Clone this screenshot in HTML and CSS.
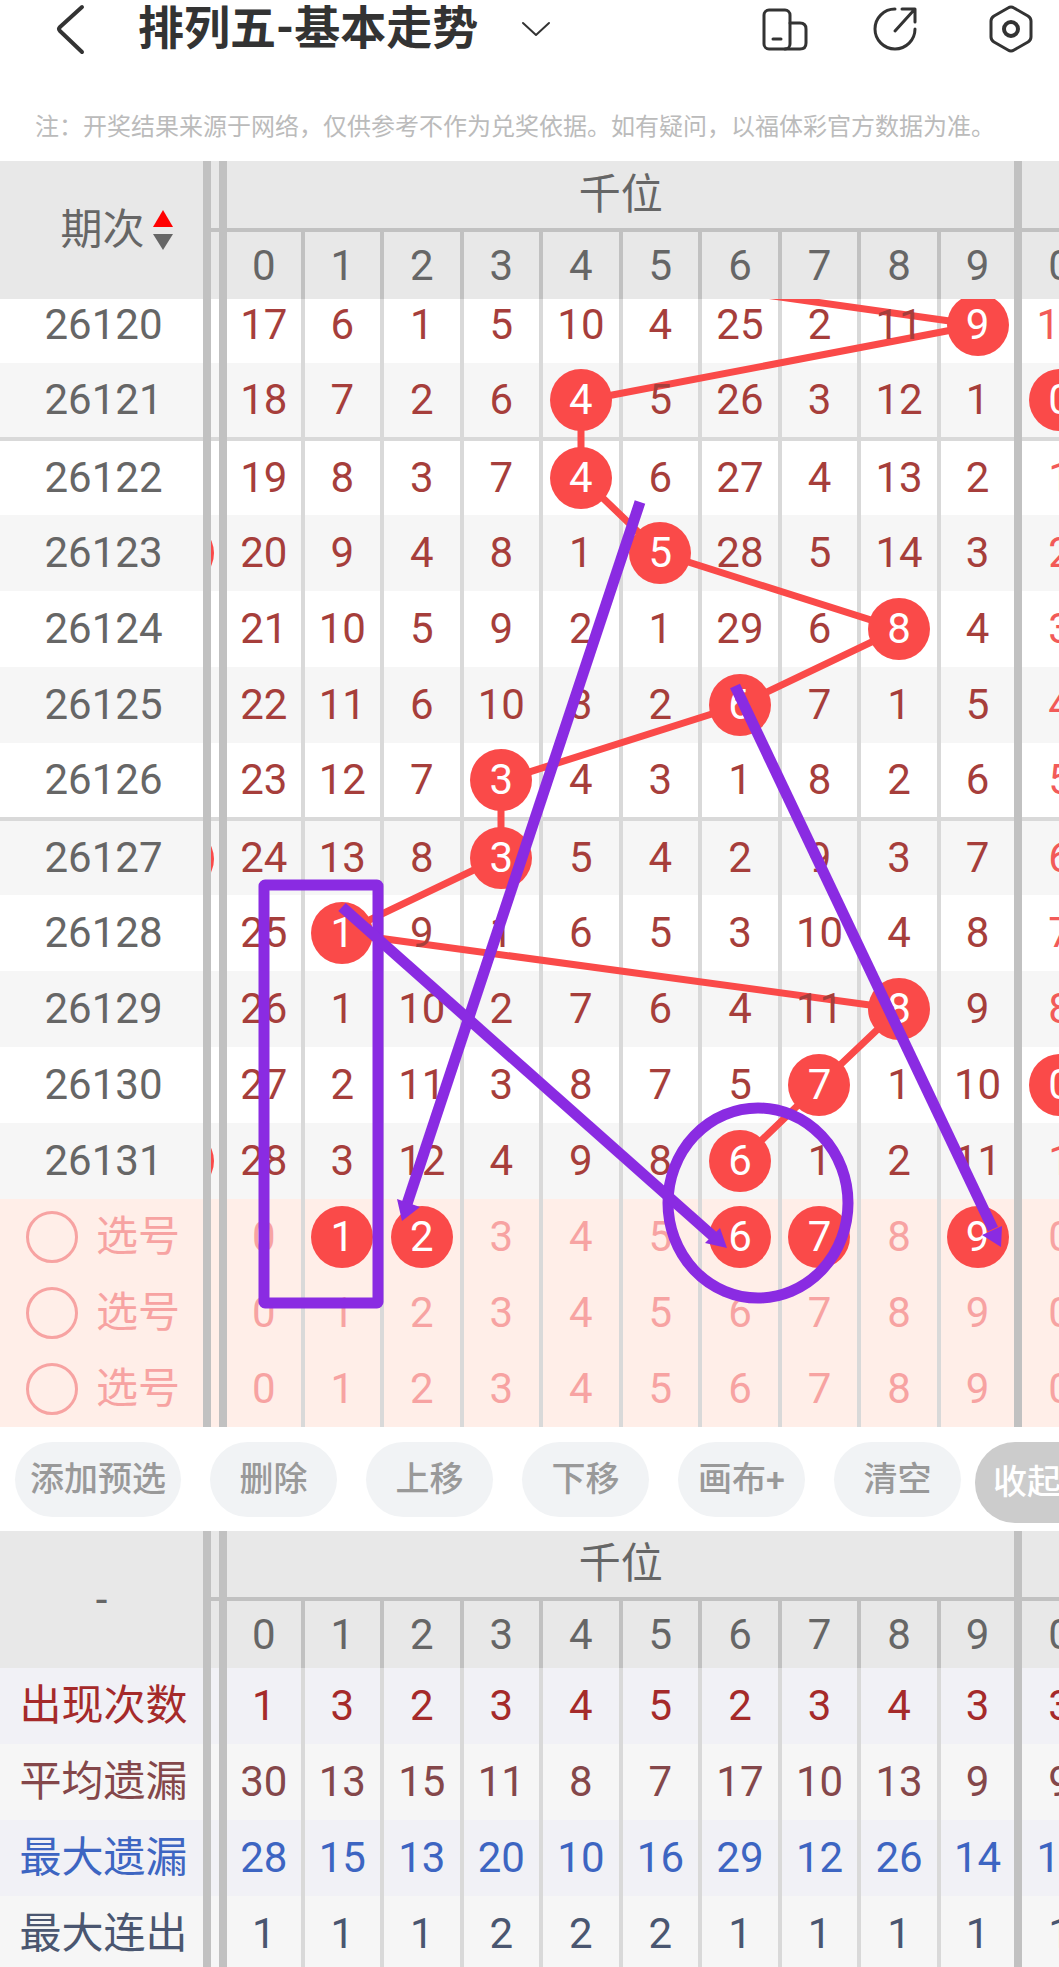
FILE: index.html
```
<!DOCTYPE html>
<html lang="zh-CN">

<head>
    <meta charset="UTF-8" />
    <meta name="viewport" content="width=device-width, initial-scale=1.0" />
    <title>排列五-基本走势</title>
    <link rel="stylesheet" href="styles.css">
</head>

<body>
    <header class="appbar">
        <button class="icon" aria-label="返回">
            <svg viewBox="0 0 48 48"><path d="M36 2 L14 22 Q12 24 14 26 L36 47" stroke-width="4" /></svg>
        </button>
        <h1 class="title">排列五-基本走势</h1>
        <button class="icon small" aria-label="切换玩法">
            <svg viewBox="0 0 28 28"><path d="M1 8 L14 20 L27 8" /></svg>
        </button>
        <nav class="tools">
            <button class="icon" aria-label="横竖屏">
                <svg viewBox="0 0 48 48">
                    <rect x="3" y="5" width="26" height="39" rx="5" />
                    <path d="M29 18 H39 Q45 18 45 24 V38 Q45 44 39 44 H24 M12 34 H20" />
                </svg>
            </button>
            <button class="icon" aria-label="分享">
                <svg viewBox="0 0 48 48">
                    <path d="M21 4 A20 20 0 1 0 41 24 M21 26 L40 5 M28 4 H41 V17" />
                </svg>
            </button>
            <button class="icon" aria-label="设置">
                <svg viewBox="0 0 48 48">
                    <path d="M21 3 Q24 1 27 3 L41 11 Q44 13 44 16 V32 Q44 35 41 37 L27 45 Q24 47 21 45 L7 37 Q4 35 4 32 V16 Q4 13 7 11 Z" />
                    <circle cx="24" cy="24" r="7" stroke-width="4" />
                </svg>
            </button>
        </nav>
    </header>
    <p class="notice">注：开奖结果来源于网络，仅供参考不作为兑奖依据。如有疑问，以福体彩官方数据为准。</p>

    <main>
        <section class="pane">
            <table class="grid head">
                <colgroup>
                    <col class="col-label">
                    <col class="col-gap">
                    <col span="11">
                </colgroup>
                <tr>
                    <th rowspan="2">
                        <button class="sort">期次
                            <svg viewBox="0 0 20 40"><path d="M10 0 L20 17 H0 Z" fill="#ff0000" /><path d="M0 24 H20 L10 40 Z" fill="#666666" /></svg>
                        </button>
                    </th>
                    <th></th>
                    <th colspan="10">千位</th>
                    <th></th>
                </tr>
                <tr><th></th><th>0</th><th>1</th><th>2</th><th>3</th><th>4</th><th>5</th><th>6</th><th>7</th><th>8</th><th>9</th><th>0</th></tr>
            </table>

            <div class="chart">
                <table class="grid body">
                    <colgroup>
                        <col class="col-label">
                        <col class="col-gap">
                        <col span="11">
                    </colgroup>
                    <tr><th>26120</th><td></td><td>17</td><td>6</td><td>1</td><td>5</td><td>10</td><td>4</td><td>25</td><td>2</td><td>11</td><td><b class="ball">9</b></td><td>10</td></tr>
                    <tr class="line"><th>26121</th><td></td><td>18</td><td>7</td><td>2</td><td>6</td><td><b class="ball">4</b></td><td>5</td><td>26</td><td>3</td><td>12</td><td>1</td><td><b class="ball">0</b></td></tr>
                    <tr><th>26122</th><td></td><td>19</td><td>8</td><td>3</td><td>7</td><td><b class="ball">4</b></td><td>6</td><td>27</td><td>4</td><td>13</td><td>2</td><td>1</td></tr>
                    <tr><th>26123</th><td><i class="ball edge"></i></td><td>20</td><td>9</td><td>4</td><td>8</td><td>1</td><td><b class="ball">5</b></td><td>28</td><td>5</td><td>14</td><td>3</td><td>2</td></tr>
                    <tr><th>26124</th><td></td><td>21</td><td>10</td><td>5</td><td>9</td><td>2</td><td>1</td><td>29</td><td>6</td><td><b class="ball">8</b></td><td>4</td><td>3</td></tr>
                    <tr><th>26125</th><td></td><td>22</td><td>11</td><td>6</td><td>10</td><td>3</td><td>2</td><td><b class="ball">6</b></td><td>7</td><td>1</td><td>5</td><td>4</td></tr>
                    <tr class="line"><th>26126</th><td></td><td>23</td><td>12</td><td>7</td><td><b class="ball">3</b></td><td>4</td><td>3</td><td>1</td><td>8</td><td>2</td><td>6</td><td>5</td></tr>
                    <tr><th>26127</th><td><i class="ball edge"></i></td><td>24</td><td>13</td><td>8</td><td><b class="ball">3</b></td><td>5</td><td>4</td><td>2</td><td>9</td><td>3</td><td>7</td><td>6</td></tr>
                    <tr><th>26128</th><td></td><td>25</td><td><b class="ball">1</b></td><td>9</td><td>1</td><td>6</td><td>5</td><td>3</td><td>10</td><td>4</td><td>8</td><td>7</td></tr>
                    <tr><th>26129</th><td></td><td>26</td><td>1</td><td>10</td><td>2</td><td>7</td><td>6</td><td>4</td><td>11</td><td><b class="ball">8</b></td><td>9</td><td>8</td></tr>
                    <tr><th>26130</th><td></td><td>27</td><td>2</td><td>11</td><td>3</td><td>8</td><td>7</td><td>5</td><td><b class="ball">7</b></td><td>1</td><td>10</td><td><b class="ball">0</b></td></tr>
                    <tr><th>26131</th><td><i class="ball edge"></i></td><td>28</td><td>3</td><td>12</td><td>4</td><td>9</td><td>8</td><td><b class="ball">6</b></td><td>1</td><td>2</td><td>11</td><td>1</td></tr>
                    <tr class="pick"><th><label><input type="radio" name="pick">选号</label></th><td></td><td>0</td><td><b class="ball">1</b></td><td><b class="ball">2</b></td><td>3</td><td>4</td><td>5</td><td><b class="ball">6</b></td><td><b class="ball">7</b></td><td>8</td><td><b class="ball">9</b></td><td>0</td></tr>
                    <tr class="pick"><th><label><input type="radio" name="pick">选号</label></th><td></td><td>0</td><td>1</td><td>2</td><td>3</td><td>4</td><td>5</td><td>6</td><td>7</td><td>8</td><td>9</td><td>0</td></tr>
                    <tr class="pick"><th><label><input type="radio" name="pick">选号</label></th><td></td><td>0</td><td>1</td><td>2</td><td>3</td><td>4</td><td>5</td><td>6</td><td>7</td><td>8</td><td>9</td><td>0</td></tr>
                </table>

                <!-- trend line, under the numbers -->
                <svg class="trend" viewBox="0 0 1098 1128" preserveAspectRatio="none">
                    <polyline points="440,-50 978,26 581,102 581,178 660,254 899,330 740,406 501,482 501,558 342,634 899,710 819,786 740,862" />
                </svg>

                <!-- canvas with the user's own marks, over everything -->
                <svg class="marks" viewBox="0 0 1098 1128" preserveAspectRatio="none">
                    <rect x="264" y="586" width="114" height="418" rx="1" />
                    <ellipse cx="758" cy="904" rx="90" ry="95" />
                    <path d="M640 203 L407 905" />
                    <path d="M342 608 L714 938" />
                    <path d="M735 387 L993 930" />
                    <path class="tip" d="M402 922 L397 900 L420 908 Z" />
                    <path class="tip" d="M727 949 L720 929 L705 944 Z" />
                    <path class="tip" d="M1001 948 L1002 927 L982 936 Z" />
                </svg>
            </div>
        </section>

        <div class="actions">
            <button>添加预选</button>
            <button>删除</button>
            <button>上移</button>
            <button>下移</button>
            <button>画布+</button>
            <button>清空</button>
            <button class="fold">收起</button>
        </div>

        <section class="pane">
            <table class="grid head short">
                <colgroup>
                    <col class="col-label">
                    <col class="col-gap">
                    <col span="11">
                </colgroup>
                <tr><th rowspan="2">-</th><th></th><th colspan="10">千位</th><th></th></tr>
                <tr><th></th><th>0</th><th>1</th><th>2</th><th>3</th><th>4</th><th>5</th><th>6</th><th>7</th><th>8</th><th>9</th><th>0</th></tr>
            </table>
            <table class="grid stats">
                <colgroup>
                    <col class="col-label">
                    <col class="col-gap">
                    <col span="11">
                </colgroup>
                <tr class="count"><th>出现次数</th><td></td><td>1</td><td>3</td><td>2</td><td>3</td><td>4</td><td>5</td><td>2</td><td>3</td><td>4</td><td>3</td><td>3</td></tr>
                <tr class="average"><th>平均遗漏</th><td></td><td>30</td><td>13</td><td>15</td><td>11</td><td>8</td><td>7</td><td>17</td><td>10</td><td>13</td><td>9</td><td>9</td></tr>
                <tr class="longest"><th>最大遗漏</th><td></td><td>28</td><td>15</td><td>13</td><td>20</td><td>10</td><td>16</td><td>29</td><td>12</td><td>26</td><td>14</td><td>18</td></tr>
                <tr class="streak"><th>最大连出</th><td></td><td>1</td><td>1</td><td>1</td><td>2</td><td>2</td><td>2</td><td>1</td><td>1</td><td>1</td><td>1</td><td>1</td></tr>
            </table>
        </section>
    </main>
</body>

</html>
```
FILE: styles.css
```
:root {
    --line: #c1c1c1;
    --line-light: #d9d9d9;
    --red: #fa4a49;
    --purple: #8a2be2;
}

* {
    box-sizing: border-box;
}

body {
    margin: 0;
    height: 100vh;
    overflow: hidden;
    background-color: #fff;
    color: #666;
    font-family: Roboto, "Noto Sans CJK SC", sans-serif;
}

button {
    border: none;
    padding: 0;
    background: none;
    color: inherit;
    font: inherit;
}

/* top bar */
.appbar {
    display: flex;
    align-items: center;
    height: 58px;
    padding: 0 24px 0 46px;
    color: #333;
}

.title {
    margin: 0 44px;
    padding-bottom: 2px;
    font-size: 46px;
    line-height: 56px;
    font-weight: 700;
    white-space: nowrap;
}

.icon {
    width: 48px;
    height: 48px;
    flex: none;
}

.icon.small {
    width: 28px;
    height: 28px;
}

.icon svg {
    display: block;
    width: 100%;
    height: 100%;
    fill: none;
    stroke: currentColor;
    stroke-width: 3;
    stroke-linecap: round;
    stroke-linejoin: round;
    overflow: visible;
}

.icon.small svg {
    stroke-width: 2;
}

.tools {
    display: flex;
    gap: 65px;
    margin-left: auto;
}

.notice {
    margin: 0;
    padding: 53px 35px 18px;
    color: #bbb;
    font-size: 24px;
    line-height: 32px;
    white-space: nowrap;
}

/* tables */
.pane {
    overflow: hidden;
}

/* the next position peeks in at the right edge */
.grid,
.chart {
    width: calc(100% + 39px);
}

.grid {
    table-layout: fixed;
    border-collapse: collapse;
    font-size: 42px;
    line-height: 60px;
}

.col-label {
    width: 207px;
}

.col-gap {
    width: 16px;
}

.grid th,
.grid td {
    height: 76px;
    padding: 0;
    font-weight: 400;
    text-align: center;
    white-space: nowrap;
    border-right: 4px solid var(--line-light);
}

.grid tr th:first-child,
.grid td:nth-child(2),
.grid td:nth-child(12) {
    border-right: 8px solid var(--line);
}

.grid:not(.head) th {
    padding-left: 4px;
}

.grid.head {
    background-color: #e8e8e8;
}

.grid.head th {
    height: 69px;
    border-right: 4px solid var(--line);
}

.grid.head tr:first-child th {
    border-right: 8px solid var(--line);
}

.grid.head tr:first-child th:not(:first-child) {
    border-bottom: 4px solid var(--line);
}

.grid.head tr:last-child th:first-child,
.grid.head tr:last-child th:nth-child(11) {
    border-right: 8px solid var(--line);
}

.grid tr td:last-child,
.grid.head tr th:last-child:last-child {
    border-right: none;
}

.grid.short tr:first-child th {
    height: 68px;
}

.sort {
    display: inline-flex;
    align-items: center;
    gap: 8px;
    padding-left: 30px;
}

.sort svg {
    width: 20px;
    height: 40px;
}

/* chart */
.chart {
    position: relative;
    overflow: hidden;
}

.chart .grid {
    width: 100%;
}

/* scrolled a little under the header */
.body {
    margin-top: -12px;
}

.body tr:nth-child(even) {
    background-color: #f6f6f6;
}

.body .line th,
.body .line td {
    border-bottom: 4px solid var(--line-light);
}

.body td {
    position: relative;
    z-index: 1;
    color: #a63e3b;
}

.body td:last-child {
    color: #f25a58;
}

.body td:nth-child(2) {
    overflow: hidden;
}

.body tr.pick {
    background-color: #ffeee8;
}

.body .pick th,
.body .pick td {
    color: #f7a3a2;
}

.ball {
    display: block;
    width: 62px;
    height: 62px;
    margin: 0 auto;
    border-radius: 50%;
    background-color: var(--red);
    color: #fff;
    font-weight: 400;
    line-height: 62px;
}

/* ball of the position that is scrolled away to the left */
.ball.edge {
    position: absolute;
    top: 7px;
    right: 5px;
}

.pick label {
    display: flex;
    align-items: center;
    gap: 18px;
    padding-left: 22px;
}

.pick input {
    appearance: none;
    width: 52px;
    height: 52px;
    margin: 0;
    border: 3px solid #f7a3a2;
    border-radius: 50%;
}

.trend,
.marks {
    position: absolute;
    top: 0;
    left: 0;
    width: 100%;
    height: 100%;
    fill: none;
    pointer-events: none;
}

.trend {
    z-index: 0;
    stroke: var(--red);
    stroke-width: 7;
}

.marks {
    z-index: 2;
    stroke: var(--purple);
    stroke-width: 11;
    stroke-linejoin: round;
}

.marks .tip {
    fill: var(--purple);
    stroke: none;
}

/* buttons */
.actions {
    display: flex;
    gap: 29px;
    height: 104px;
    padding: 15px 0 0 15px;
    overflow: hidden;
}

.actions button {
    flex: none;
    min-width: 127px;
    height: 75px;
    padding: 0 15px 6px;
    border-radius: 38px;
    background-color: #f1f3f5;
    color: #999;
    font-size: 34px;
    font-weight: 500;
    white-space: nowrap;
}

.actions .fold {
    height: 81px;
    margin-left: -15px;
    padding: 0 18px 6px;
    border-radius: 40px;
    background-color: #ccc;
    color: #fff;
    text-align: left;
}

/* stats */
.stats tr {
    background-color: #f6f6f6;
}

.stats .count {
    background-color: #f1f1f6;
    color: #a52a2a;
}

.stats .average {
    color: #84474a;
}

.stats .longest {
    background-color: #f1f1f6;
    color: #3d65c2;
}

.stats .streak {
    color: #4a5670;
}
```
